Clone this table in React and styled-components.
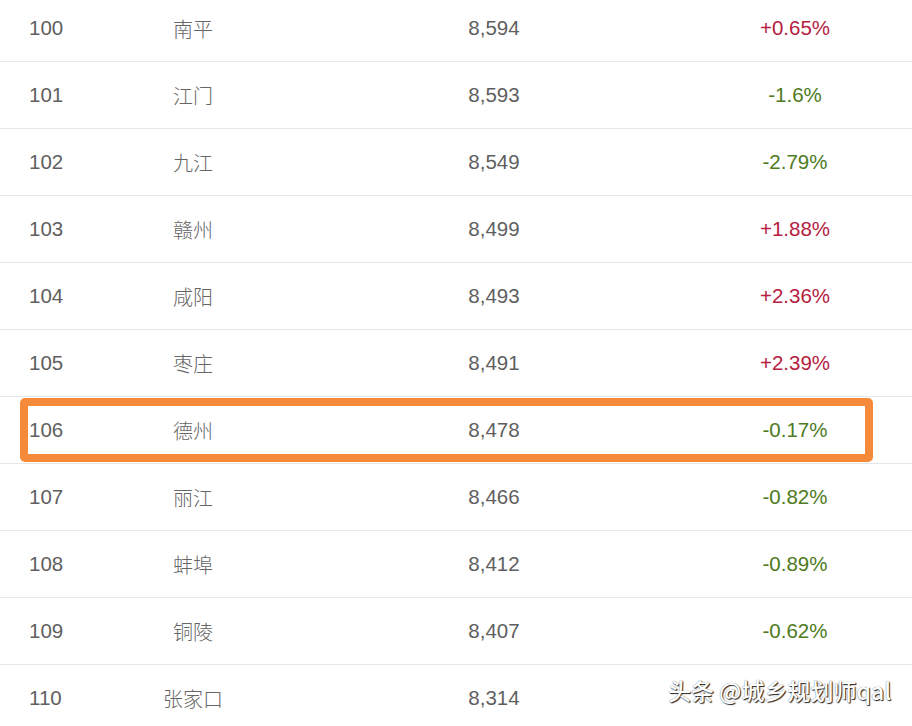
import React from "react";
import styled, { createGlobalStyle } from "styled-components";

const Global = createGlobalStyle`
  html, body { margin: 0; padding: 0; background: #ffffff; }
  body { overflow: hidden; }
`;

const Page = styled.div`
  position: relative;
  width: 912px;
  height: 726px;
  overflow: hidden;
  background: #fff;
  font-family: "Liberation Sans", "Noto Sans CJK SC", sans-serif;
`;

const Table = styled.div`
  display: flex;
  flex-direction: column;
  margin-top: -5px;
`;

const Row = styled.div`
  position: relative;
  display: grid;
  grid-template-columns: 100px 186px 416px 186px;
  align-items: center;
  height: 66px;
  border-bottom: 1px solid #e6e6e6;
  font-size: 20.5px;
  color: #5f5f5f;
`;

const Rank = styled.div`
  padding-left: 29px;
`;

const City = styled.div`
  text-align: center;
  font-family: "Noto Sans CJK SC", sans-serif;
  font-weight: 300;
  font-size: 20px;
  color: #666;
`;

const Num = styled.div`
  text-align: center;
`;

const Change = styled.div`
  text-align: center;
  color: ${(p) => (p.$up ? "#b5213f" : "#4e7a22")};
`;

const Highlight = styled.div`
  position: absolute;
  left: 20px;
  top: 1px;
  width: 853px;
  height: 64px;
  box-sizing: border-box;
  border: 8px solid #f68a3b;
  border-radius: 5px;
  pointer-events: none;
`;

const Watermark = styled.div`
  position: absolute;
  right: 21px;
  top: 673px;
  font-family: "Noto Sans CJK SC", sans-serif;
  font-size: 23px;
  font-weight: 500;
  color: #ffffff;
  text-shadow: 1px 1px 1px rgba(0, 0, 0, 0.85), 0 0 1px rgba(0, 0, 0, 0.6);
  white-space: nowrap;
`;

const data = [
  ["100", "南平", "8,594", "+0.65%"],
  ["101", "江门", "8,593", "-1.6%"],
  ["102", "九江", "8,549", "-2.79%"],
  ["103", "赣州", "8,499", "+1.88%"],
  ["104", "咸阳", "8,493", "+2.36%"],
  ["105", "枣庄", "8,491", "+2.39%"],
  ["106", "德州", "8,478", "-0.17%"],
  ["107", "丽江", "8,466", "-0.82%"],
  ["108", "蚌埠", "8,412", "-0.89%"],
  ["109", "铜陵", "8,407", "-0.62%"],
  ["110", "张家口", "8,314", ""],
];

export default function App() {
  return (
    <Page>
      <Global />
      <Table>
        {data.map(([rank, city, num, chg]) => (
          <Row key={rank}>
            <Rank>{rank}</Rank>
            <City>{city}</City>
            <Num>{num}</Num>
            <Change $up={chg.startsWith("+")}>{chg}</Change>
            {rank === "106" && <Highlight />}
          </Row>
        ))}
      </Table>
      <Watermark>头条 @城乡规划师qal</Watermark>
    </Page>
  );
}
